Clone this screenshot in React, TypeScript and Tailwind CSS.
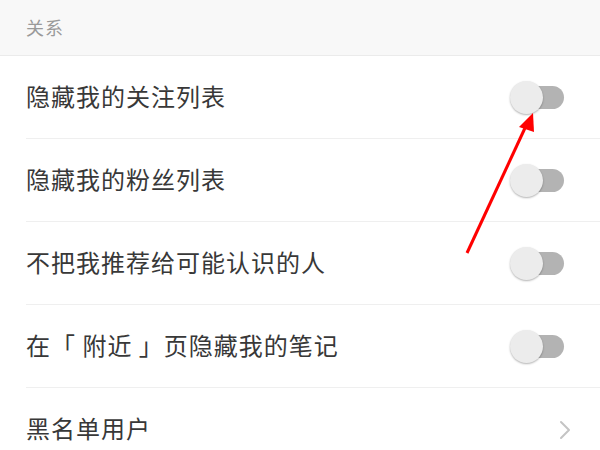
const font = { fontFamily: '"Noto Sans CJK SC", "Noto Sans", sans-serif' }

const rows = [
  { label: "隐藏我的关注列表", toggle: true },
  { label: "隐藏我的粉丝列表", toggle: true },
  { label: "不把我推荐给可能认识的人", toggle: true },
  { label: "在「 附近 」页隐藏我的笔记", toggle: true },
  { label: "黑名单用户", toggle: false },
]

function Toggle() {
  return (
    <div className="relative w-[54px] h-[33px] flex items-center">
      <div className="absolute left-[14px] right-0 h-[23px] rounded-full bg-[#b3b3b3]" />
      <div className="absolute left-0 w-[33px] h-[33px] rounded-full bg-[#ececec] shadow-[0_1px_2px_rgba(0,0,0,0.3)]" />
    </div>
  )
}

function Chevron() {
  return (
    <svg width="14" height="20" viewBox="0 0 14 20" className="mr-[-9px]">
      <polyline points="2,2 10,10 2,18" fill="none" stroke="#c4c4c4" strokeWidth="2" strokeLinecap="round" strokeLinejoin="round" />
    </svg>
  )
}

export default function App() {
  return (
    <div className="relative w-[600px] h-[450px] overflow-hidden bg-white" style={font}>
      <div className="h-[56px] bg-[#f8f8f8] border-b border-[#ebebeb] flex items-center px-[26px]">
        <span className="text-[18px] text-[#9a9a9a] tracking-[1px]">关系</span>
      </div>
      <div className="pl-[26px]">
        {rows.map((r, i) => (
          <div
            key={i}
            className={`h-[83px] flex items-center justify-between pr-[36px] ${i < rows.length - 1 ? "border-b border-[#efefef]" : ""}`}
          >
            <span className="text-[24px] text-[#383838] tracking-[1px] mt-[-3px]">{r.label}</span>
            {r.toggle ? <Toggle /> : <Chevron />}
          </div>
        ))}
      </div>
      <svg className="absolute left-0 top-0 pointer-events-none" width="600" height="450">
        <line x1="467" y1="253" x2="525" y2="128" stroke="#ff0000" strokeWidth="3" />
        <polygon points="533,113 519,127 534,132" fill="#ff0000" />
      </svg>
    </div>
  )
}
